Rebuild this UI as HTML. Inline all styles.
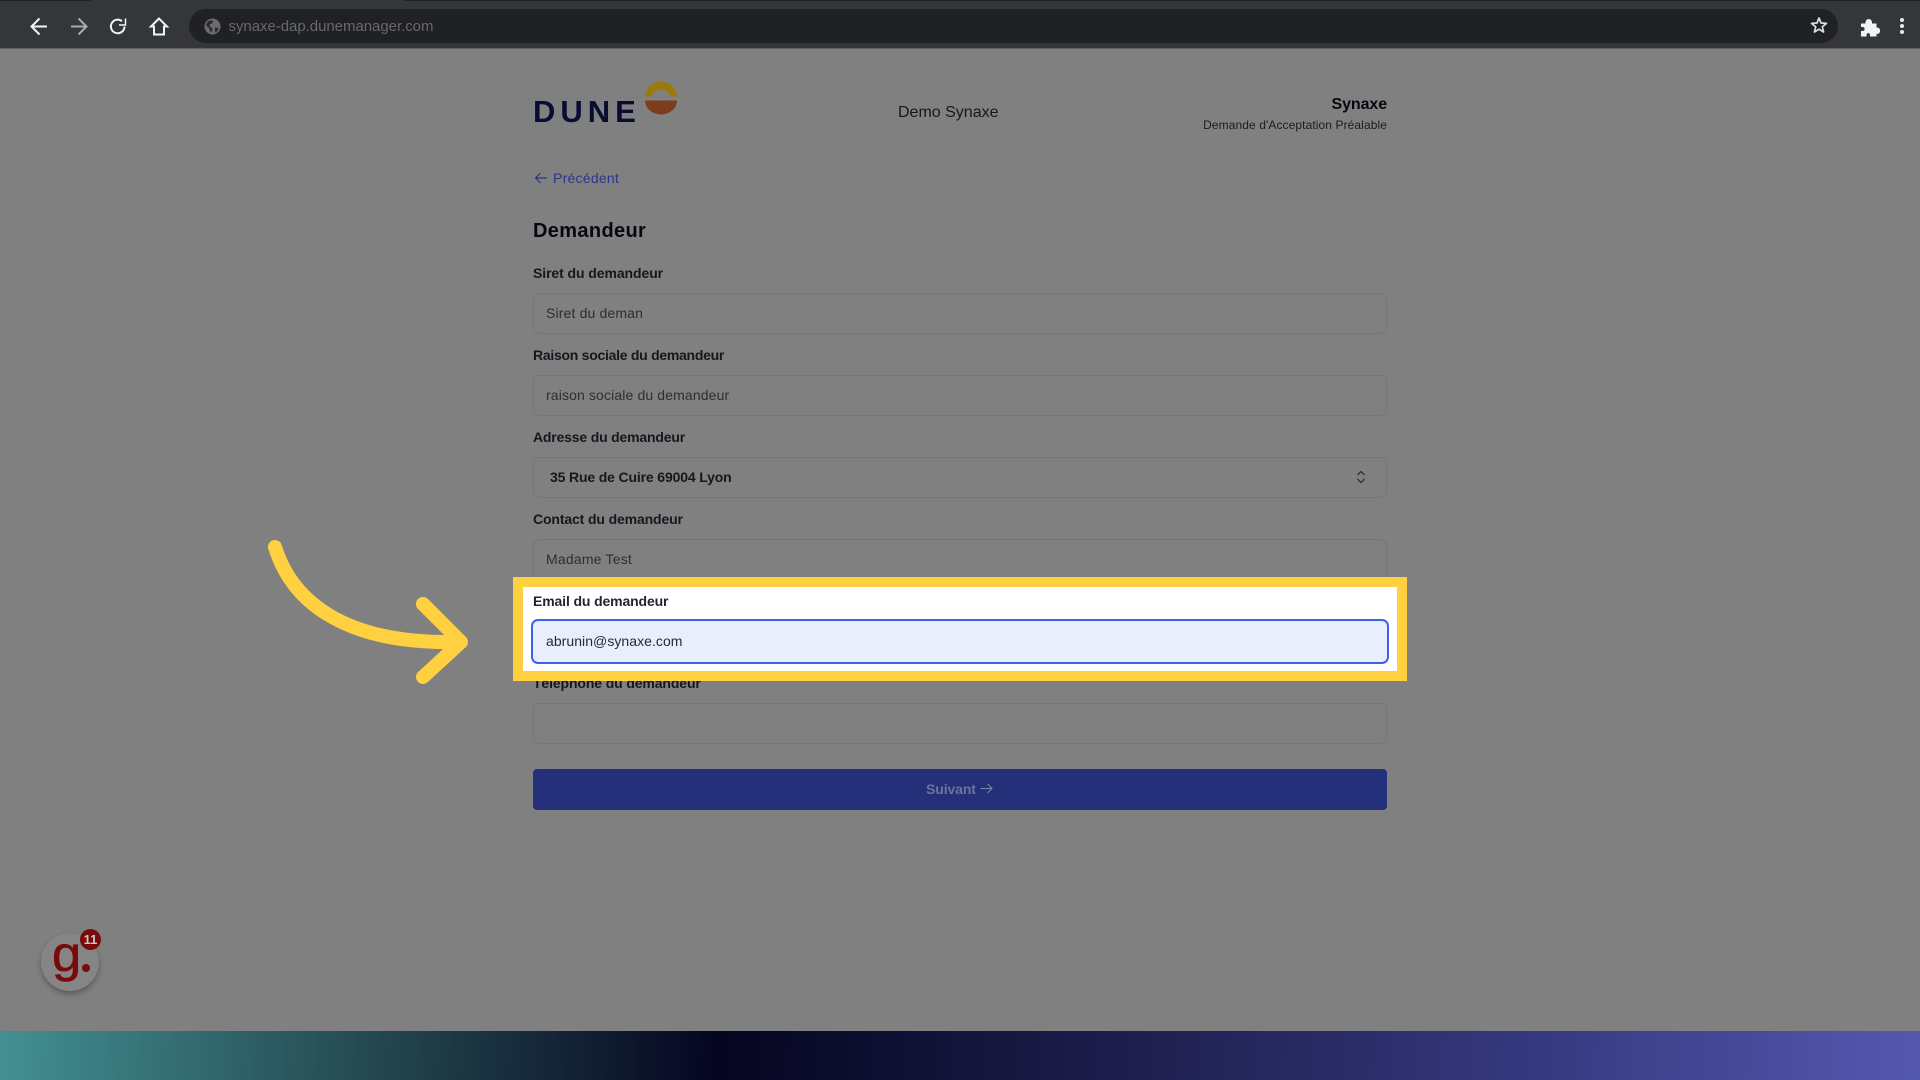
<!DOCTYPE html>
<html lang="fr"><head><meta charset="utf-8"><title>Demandeur</title>
<style>
html,body{margin:0;padding:0;width:1920px;height:1080px;overflow:hidden;background:#808080}
body{position:relative;font-family:"Liberation Sans",sans-serif}
div,span{position:absolute;box-sizing:border-box;white-space:nowrap}
svg{position:absolute;overflow:visible}
.l{left:533px;font-size:14px;font-weight:700;color:#15171f;line-height:20px;height:20px}
.i{left:533px;width:854px;height:41px;border:1px solid #767676;border-radius:6px;background:#808080}
.t{left:546px;font-size:14px;color:#2c2e36;line-height:20px;height:20px}
</style></head><body>
<div style="left:0;top:0;width:1920px;height:49px;background:#35363a;border-bottom:1px solid #5c6468"></div>
<div style="left:0;top:0;width:91px;height:1px;background:#202124"></div>
<div style="left:404px;top:0;width:1516px;height:1px;background:#202124"></div>
<svg style="left:0;top:0" width="170" height="49" fill="none" stroke="#f1f3f4" stroke-width="2">
<path d="M47 26.500H32M39.500 18.500L31.500 26.500L39.500 34.500"/>
<path d="M71 26.500H86M78.500 18.500L86.500 26.500L78.500 34.500" stroke="#a9abae"/>
<path d="M124.500 26.500A6.800 6.800 0 1 1 122 21.200" /><path d="M125.500 18.500V25H119" stroke-width="1.500"/>
<path d="M159 18.500L151 26.500H154V34.500H164V26.500H167L159 18.500Z" />
</svg>
<div style="left:189px;top:9px;width:1649px;height:34px;border-radius:17px;background:#202124"></div>
<svg style="left:204px;top:18px" width="17" height="17" viewBox="0 0 17 17"><circle cx="8.500" cy="8.500" r="8" fill="#6a6b6e"/><path d="M4 3.500C6 2.500 8 2 9 3L8 5.500 5.500 6.500 6 9 8.500 10 8 14 6 13 5 10 2 7.500ZM11 9.500L14.500 10 13 13.500 11 14.500Z" fill="#2a2b2e"/></svg>
<span style="left:228.500px;top:18px;font-size:15px;line-height:18px;color:#68696c;letter-spacing:-.04px">synaxe-dap.dunemanager.com</span>
<svg style="left:1810px;top:16px" width="18" height="18" viewBox="0 0 18 18"><path d="M9 2L11 7 16.500 7.400 12.300 10.800 13.600 16 9 13.200 4.400 16 5.700 10.800 1.500 7.400 7 7Z" fill="none" stroke="#dadce0" stroke-width="1.700" stroke-linejoin="round"/></svg>
<svg style="left:1860px;top:17px" width="20" height="20" viewBox="0 0 20 20"><path d="M1.500 7H6V5.500C6 1.500 11.500 1.500 11.500 5.500V7H16V11H17C20.500 11 20.500 16.500 17 16.500H16V19H10.500V18C10.500 14.800 6 14.800 6 18V19H1.500V14.500H2.500C6 14.500 6 9.500 2.500 9.500H1.500Z" fill="#f1f3f4" stroke="#f1f3f4" stroke-width="1"/></svg>
<svg style="left:1899px;top:17px" width="6" height="18"><circle cx="3" cy="3" r="2" fill="#e8eaed"/><circle cx="3" cy="9" r="2" fill="#e8eaed"/><circle cx="3" cy="15" r="2" fill="#e8eaed"/></svg>

<span style="left:533px;top:96px;font-size:31px;line-height:31px;font-weight:700;color:#070c30;letter-spacing:5px">DUNE</span>
<svg style="left:644px;top:81px" width="34" height="34" viewBox="0 0 34 34"><path d="M1 15.500A16 15 0 0 1 33 15.500H26.500C25.500 11 22 9 17 9S8.500 11 7.500 15.500Z" fill="#9a7a0d"/><path d="M1 19.500H33A16 14 0 0 1 1 19.500Z" fill="#7e3c1c"/></svg>
<span style="left:898px;top:103px;font-size:16px;line-height:20px;color:#15171f">Demo Synaxe</span>
<span style="right:533px;top:95px;font-size:16px;line-height:20px;font-weight:700;color:#07080f;letter-spacing:-.1px">Synaxe</span>
<span style="right:533px;top:117px;font-size:12px;line-height:16px;color:#1a1b26;letter-spacing:.09px">Demande d'Acceptation Préalable</span>
<svg style="left:534px;top:171px" width="14" height="14" fill="none" stroke="#2a348e" stroke-width="1.200"><path d="M13 7H1.500M6.500 2L1.500 7L6.500 12"/></svg>
<span style="left:553px;top:168px;font-size:14px;line-height:20px;color:#2a348e;letter-spacing:.25px">Précédent</span>
<span style="left:533px;top:219px;font-size:20px;line-height:24px;font-weight:700;color:#07080f;letter-spacing:.35px">Demandeur</span>

<div class="l" style="top:263px;letter-spacing:-.08px">Siret du demandeur</div>
<div class="i" style="top:293px"></div><div class="t" style="top:303px;letter-spacing:.15px">Siret du deman</div>
<div class="l" style="top:345px;letter-spacing:-.27px">Raison sociale du demandeur</div>
<div class="i" style="top:375px"></div><div class="t" style="top:385px;letter-spacing:.13px">raison sociale du demandeur</div>
<div class="l" style="top:427px;letter-spacing:-.18px">Adresse du demandeur</div>
<div class="i" style="top:457px"></div><div class="t" style="top:467px;left:550px;font-weight:700;color:#15171f;letter-spacing:-.15px">35 Rue de Cuire 69004 Lyon</div>
<svg style="left:1356px;top:470px" width="10" height="14" fill="none" stroke="#2d2e33" stroke-width="1.300"><path d="M1.500 5L5 1.500L8.500 5M1.500 9L5 12.500L8.500 9"/></svg>
<div class="l" style="top:509px;letter-spacing:-.13px">Contact du demandeur</div>
<div class="i" style="top:539px"></div><div class="t" style="top:549px;letter-spacing:.2px">Madame Test</div>
<div class="l" style="top:673px;letter-spacing:-.12px">Téléphone du demandeur</div>
<div class="i" style="top:703px"></div>
<div style="left:533px;top:769px;width:854px;height:41px;border-radius:4px;background:#24307a"></div>
<span style="left:926px;top:779px;font-size:14px;line-height:20px;font-weight:700;color:#6f7399;letter-spacing:-.1px">Suivant</span>
<svg style="left:980px;top:782px" width="13" height="13" fill="none" stroke="#7f83a6" stroke-width="1.100"><path d="M0.500 6.500H12M7.500 2L12 6.500L7.500 11"/></svg>

<div style="left:513px;top:577px;width:894px;height:104px;background:#fff;border:10px solid #ffd040"></div>
<div class="l" style="top:591px;color:#1f2430;letter-spacing:-.13px">Email du demandeur</div>
<div style="left:531px;top:619px;width:858px;height:45px;border:2px solid #3f5ff0;border-radius:7px;background:#e8eefb"></div>
<div class="t" style="top:631px;color:#262a36;letter-spacing:.05px">abrunin@synaxe.com</div>

<svg style="left:0;top:0" width="1920" height="1080" fill="none" stroke="#ffd040" stroke-width="14" stroke-linecap="round" stroke-linejoin="round"><path d="M275 547C292 602 345 644 455 642"/><path d="M423 604L461 642L423 677"/></svg>

<div style="left:41px;top:933px;width:58px;height:58px;border-radius:50%;background:#858585;box-shadow:0 3px 6px rgba(0,0,0,.3)"></div>
<span style="left:52px;top:925px;font-size:50px;line-height:58px;color:#7a0a0a;-webkit-text-stroke:.6px #7a0a0a;transform:scaleX(1.05);transform-origin:0 0">g</span>
<div style="left:82px;top:964px;width:8px;height:8px;border-radius:50%;background:#7a0a0a"></div>
<div style="left:80px;top:929px;width:21px;height:21px;border-radius:50%;background:#7a0a0a;color:#c9c9c9;font-size:13px;font-weight:700;line-height:21px;text-align:center">11</div>

<div style="left:0;top:1031px;width:1920px;height:49px;background:linear-gradient(93deg,#429092 0%,#23464e 20%,#050520 37.500%,#1f2050 60%,#36397f 80%,#5558b0 100%)"></div>
</body></html>
